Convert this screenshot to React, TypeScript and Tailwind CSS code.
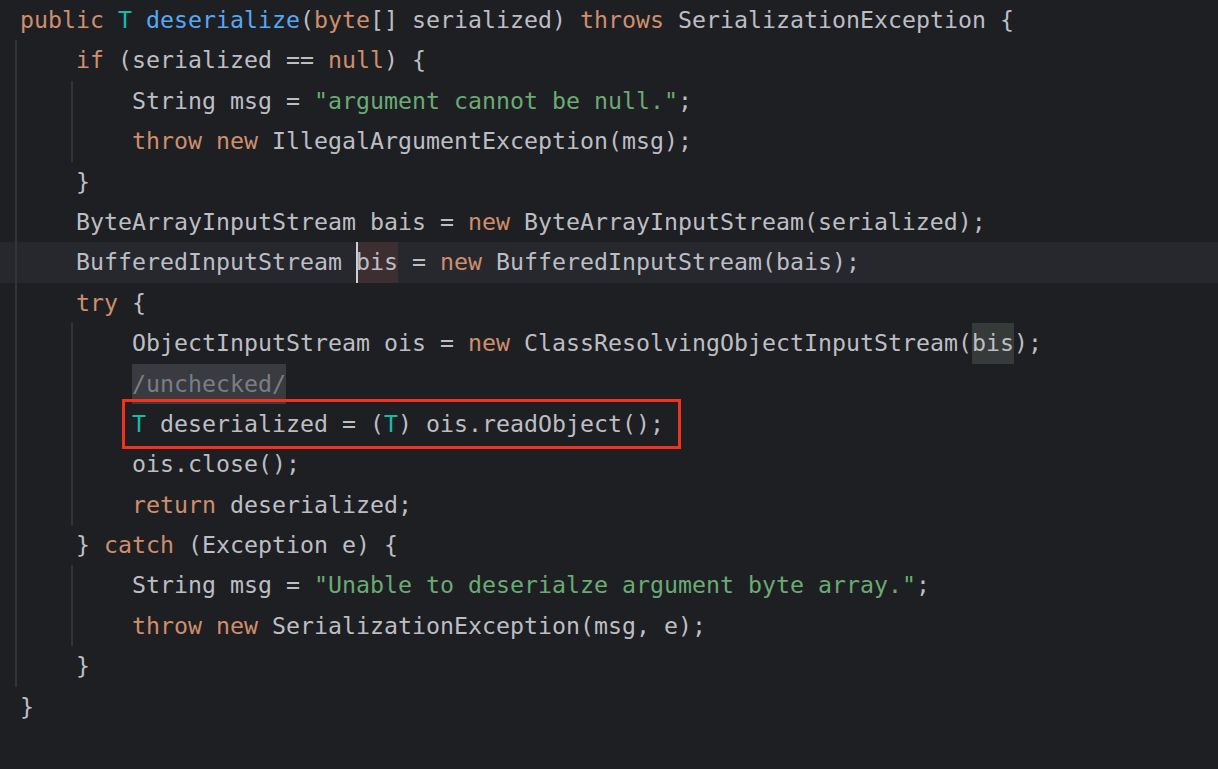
type Tok = [string, string?];

const KW = "text-[#cf8e6d]";
const TP = "text-[#16baac]";
const FN = "text-[#56a8f5]";
const STR = "text-[#6aab73]";

// each line: indent depth + tokens
const lines: [number, Tok[]][] = [
  [0, [["public", KW], [" "], ["T", TP], [" "], ["deserialize", FN], ["("], ["byte", KW], ["[] serialized) "], ["throws", KW], [" SerializationException {"]]],
  [1, [["if", KW], [" (serialized == "], ["null", KW], [") {"]]],
  [2, [["String msg = "], ['"argument cannot be null."', STR], [";"]]],
  [2, [["throw", KW], [" "], ["new", KW], [" IllegalArgumentException(msg);"]]],
  [1, [["}"]]],
  [1, [["ByteArrayInputStream bais = "], ["new", KW], [" ByteArrayInputStream(serialized);"]]],
  [1, [["BufferedInputStream "], ["bis", "write"], [" = "], ["new", KW], [" BufferedInputStream(bais);"]]],
  [1, [["try", KW], [" {"]]],
  [2, [["ObjectInputStream ois = "], ["new", KW], [" ClassResolvingObjectInputStream("], ["bis", "read"], [");"]]],
  [2, [["/unchecked/", "comment"]]],
  [2, [["T", TP], [" deserialized = ("], ["T", TP], [") ois.readObject();"]]],
  [2, [["ois.close();"]]],
  [2, [["return", KW], [" deserialized;"]]],
  [1, [["} "], ["catch", KW], [" (Exception e) {"]]],
  [2, [["String msg = "], ['"Unable to deserialze argument byte array."', STR], [";"]]],
  [2, [["throw", KW], [" "], ["new", KW], [" SerializationException(msg, e);"]]],
  [1, [["}"]]],
  [0, [["}"]]],
];

function Token({ text, kind }: { text: string; kind?: string }) {
  if (kind === "write") {
    return (
      <span className="inline-block bg-[#3d2f31] shadow-[inset_2px_0_0_#ced0d6]">
        {text}
      </span>
    );
  }
  if (kind === "read") {
    return <span className="inline-block bg-[#363a38]">{text}</span>;
  }
  if (kind === "comment") {
    return (
      <span className="inline-block bg-[#393b40] text-[#7a7e85]">{text}</span>
    );
  }
  return <span className={kind}>{text}</span>;
}

function CodeLine({
  depth,
  toks,
  current,
}: {
  depth: number;
  toks: Tok[];
  current: boolean;
}) {
  return (
    <div
      className={`flex h-[40.4px] pl-[15px] ${current ? "bg-[#26282e]" : ""}`}
    >
      {Array.from({ length: depth }).map((_, k) => (
        <span
          key={k}
          className="w-[56px] shrink-0 border-l-2 border-[#313438]"
        />
      ))}
      <span className="whitespace-pre pl-[5px]">
        {toks.map(([text, kind], j) => (
          <Token key={j} text={text} kind={kind} />
        ))}
      </span>
    </div>
  );
}

export default function App() {
  return (
    <div className="relative min-h-screen bg-[#1e1f22] font-['DejaVu_Sans_Mono',monospace] text-[23.25px] leading-[40.4px] text-[#bcbec4]">
      {lines.map(([depth, toks], i) => (
        <CodeLine key={i} depth={depth} toks={toks} current={i === 6} />
      ))}

      {/* annotation box drawn over the code */}
      <div className="absolute left-[122px] top-[399px] h-[50px] w-[559px] border-[3px] border-[#f5301c]" />
    </div>
  );
}
